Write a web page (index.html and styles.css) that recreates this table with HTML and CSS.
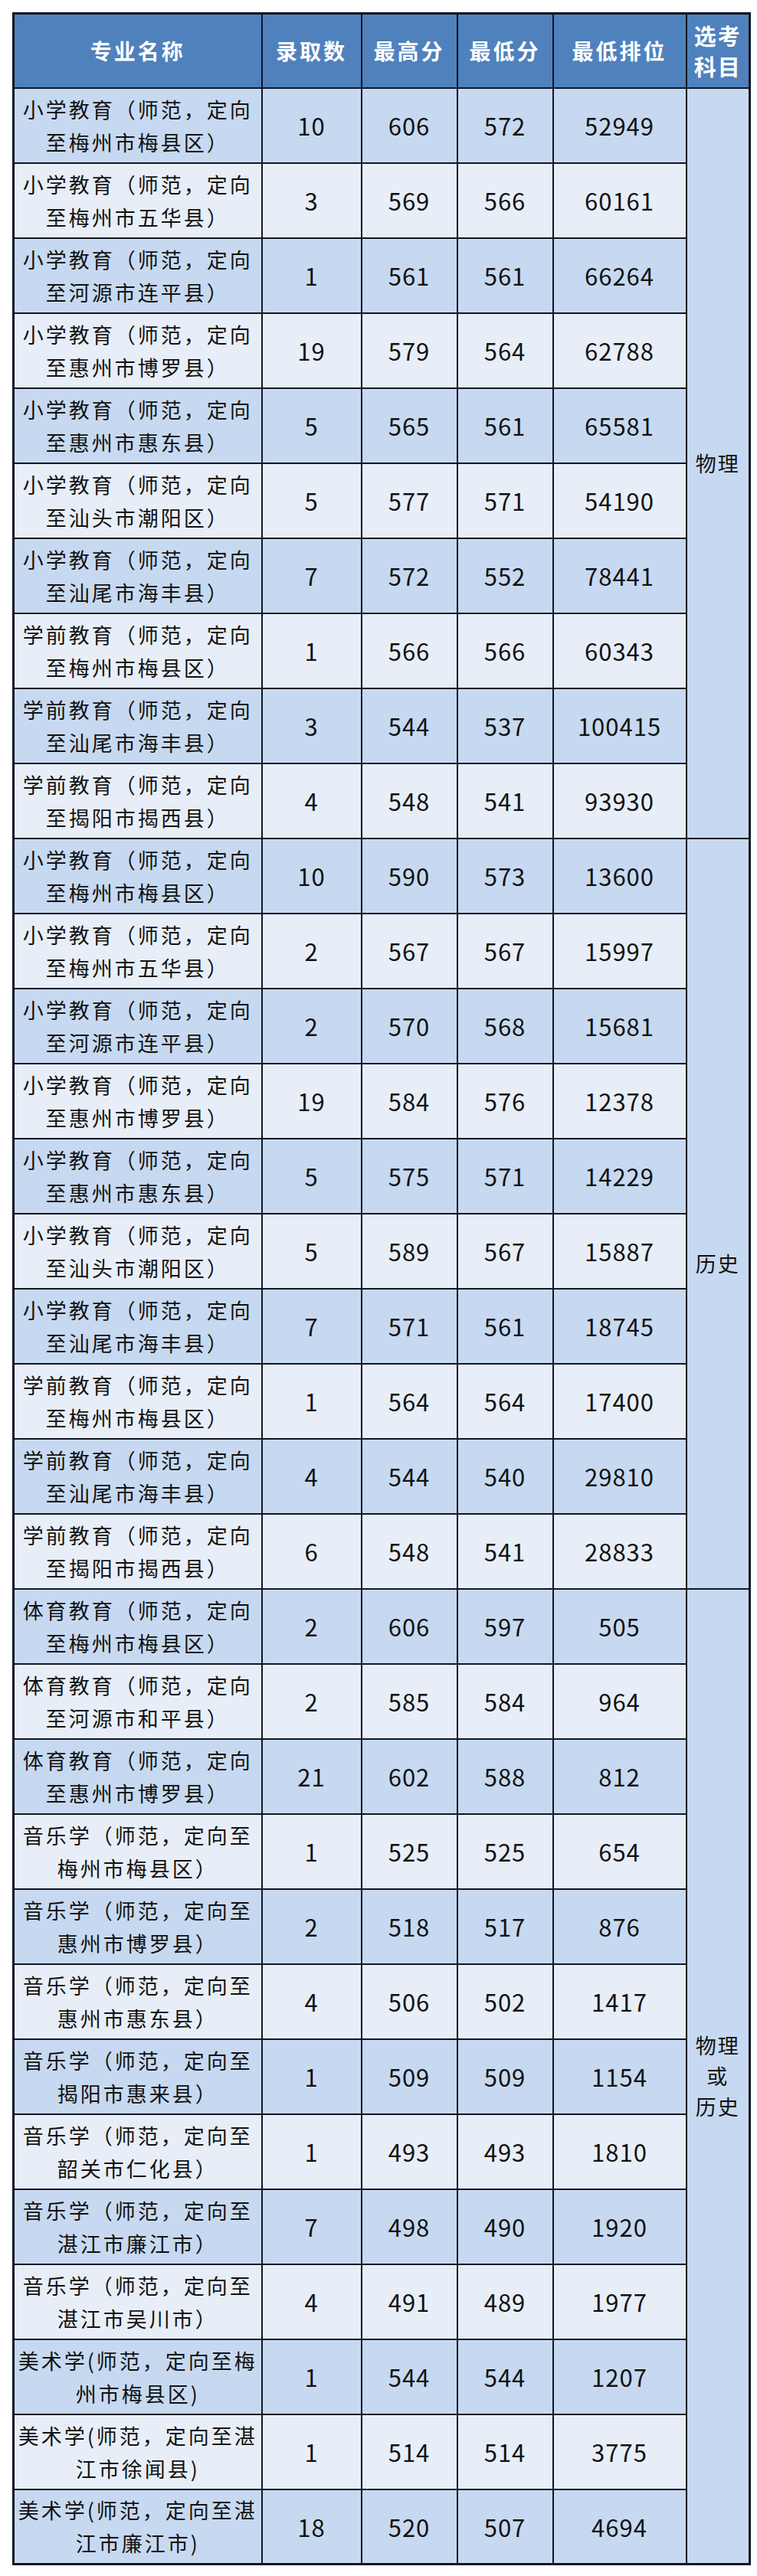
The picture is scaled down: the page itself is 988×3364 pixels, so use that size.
FILE: index.html
```html
<!DOCTYPE html>
<html lang="zh-CN">
<head>
<meta charset="utf-8">
<title>录取分数</title>
<link rel="stylesheet" href="styles.css">
</head>
<body>
<table class="score-table">
  <colgroup>
    <col class="c-name"><col class="c-num"><col class="c-hi"><col class="c-lo"><col class="c-rank"><col class="c-subj">
  </colgroup>
  <thead>
    <tr>
      <th>专业名称</th><th>录取数</th><th>最高分</th><th>最低分</th><th>最低排位</th><th class="subj-head">选考<br>科目</th>
    </tr>
  </thead>
  <tbody>
    <tr><td class="name">小学教育（师范，定向<br>至梅州市梅县区）</td><td>10</td><td>606</td><td>572</td><td>52949</td><td class="subj" rowspan="10">物理</td></tr>
    <tr><td class="name">小学教育（师范，定向<br>至梅州市五华县）</td><td>3</td><td>569</td><td>566</td><td>60161</td></tr>
    <tr><td class="name">小学教育（师范，定向<br>至河源市连平县）</td><td>1</td><td>561</td><td>561</td><td>66264</td></tr>
    <tr><td class="name">小学教育（师范，定向<br>至惠州市博罗县）</td><td>19</td><td>579</td><td>564</td><td>62788</td></tr>
    <tr><td class="name">小学教育（师范，定向<br>至惠州市惠东县）</td><td>5</td><td>565</td><td>561</td><td>65581</td></tr>
    <tr><td class="name">小学教育（师范，定向<br>至汕头市潮阳区）</td><td>5</td><td>577</td><td>571</td><td>54190</td></tr>
    <tr><td class="name">小学教育（师范，定向<br>至汕尾市海丰县）</td><td>7</td><td>572</td><td>552</td><td>78441</td></tr>
    <tr><td class="name">学前教育（师范，定向<br>至梅州市梅县区）</td><td>1</td><td>566</td><td>566</td><td>60343</td></tr>
    <tr><td class="name">学前教育（师范，定向<br>至汕尾市海丰县）</td><td>3</td><td>544</td><td>537</td><td>100415</td></tr>
    <tr><td class="name">学前教育（师范，定向<br>至揭阳市揭西县）</td><td>4</td><td>548</td><td>541</td><td>93930</td></tr>

    <tr><td class="name">小学教育（师范，定向<br>至梅州市梅县区）</td><td>10</td><td>590</td><td>573</td><td>13600</td><td class="subj subj-low" rowspan="10">历史</td></tr>
    <tr><td class="name">小学教育（师范，定向<br>至梅州市五华县）</td><td>2</td><td>567</td><td>567</td><td>15997</td></tr>
    <tr><td class="name">小学教育（师范，定向<br>至河源市连平县）</td><td>2</td><td>570</td><td>568</td><td>15681</td></tr>
    <tr><td class="name">小学教育（师范，定向<br>至惠州市博罗县）</td><td>19</td><td>584</td><td>576</td><td>12378</td></tr>
    <tr><td class="name">小学教育（师范，定向<br>至惠州市惠东县）</td><td>5</td><td>575</td><td>571</td><td>14229</td></tr>
    <tr><td class="name">小学教育（师范，定向<br>至汕头市潮阳区）</td><td>5</td><td>589</td><td>567</td><td>15887</td></tr>
    <tr><td class="name">小学教育（师范，定向<br>至汕尾市海丰县）</td><td>7</td><td>571</td><td>561</td><td>18745</td></tr>
    <tr><td class="name">学前教育（师范，定向<br>至梅州市梅县区）</td><td>1</td><td>564</td><td>564</td><td>17400</td></tr>
    <tr><td class="name">学前教育（师范，定向<br>至汕尾市海丰县）</td><td>4</td><td>544</td><td>540</td><td>29810</td></tr>
    <tr><td class="name">学前教育（师范，定向<br>至揭阳市揭西县）</td><td>6</td><td>548</td><td>541</td><td>28833</td></tr>

    <tr><td class="name">体育教育（师范，定向<br>至梅州市梅县区）</td><td>2</td><td>606</td><td>597</td><td>505</td><td class="subj" rowspan="13">物理<br>或<br>历史</td></tr>
    <tr><td class="name">体育教育（师范，定向<br>至河源市和平县）</td><td>2</td><td>585</td><td>584</td><td>964</td></tr>
    <tr><td class="name">体育教育（师范，定向<br>至惠州市博罗县）</td><td>21</td><td>602</td><td>588</td><td>812</td></tr>
    <tr><td class="name">音乐学（师范，定向至<br>梅州市梅县区）</td><td>1</td><td>525</td><td>525</td><td>654</td></tr>
    <tr><td class="name">音乐学（师范，定向至<br>惠州市博罗县）</td><td>2</td><td>518</td><td>517</td><td>876</td></tr>
    <tr><td class="name">音乐学（师范，定向至<br>惠州市惠东县）</td><td>4</td><td>506</td><td>502</td><td>1417</td></tr>
    <tr><td class="name">音乐学（师范，定向至<br>揭阳市惠来县）</td><td>1</td><td>509</td><td>509</td><td>1154</td></tr>
    <tr><td class="name">音乐学（师范，定向至<br>韶关市仁化县）</td><td>1</td><td>493</td><td>493</td><td>1810</td></tr>
    <tr><td class="name">音乐学（师范，定向至<br>湛江市廉江市）</td><td>7</td><td>498</td><td>490</td><td>1920</td></tr>
    <tr><td class="name">音乐学（师范，定向至<br>湛江市吴川市）</td><td>4</td><td>491</td><td>489</td><td>1977</td></tr>
    <tr><td class="name">美术学(师范，定向至梅<br>州市梅县区)</td><td>1</td><td>544</td><td>544</td><td>1207</td></tr>
    <tr><td class="name">美术学(师范，定向至湛<br>江市徐闻县)</td><td>1</td><td>514</td><td>514</td><td>3775</td></tr>
    <tr><td class="name">美术学(师范，定向至湛<br>江市廉江市)</td><td>18</td><td>520</td><td>507</td><td>4694</td></tr>
  </tbody>
</table>
</body>
</html>
```

FILE: styles.css
```css
html, body {
  margin: 0;
  padding: 0;
  background: #ffffff;
}

body {
  padding: 16px 11px 17px 16px;
  font-family: "Noto Sans CJK SC", "Noto Sans", sans-serif;
  color: #111111;
}

.score-table {
  width: 961px;
  table-layout: fixed;
  border-collapse: collapse;
  border: 3px solid #121622;
}

.c-name { width: 324px; }
.c-num { width: 130px; }
.c-hi { width: 125px; }
.c-lo { width: 125px; }
.c-rank { width: 174px; }
.c-subj { width: 83px; }

.score-table th,
.score-table td {
  border: 2px solid #121622;
  padding: 0;
  text-align: center;
  vertical-align: middle;
}

.score-table thead tr {
  height: 97px;
}

.score-table th {
  background: #4f81bd;
  color: #ffffff;
  font-weight: 700;
  font-size: 28px;
  letter-spacing: 3px;
  line-height: 40px;
}

.score-table th.subj-head {
  letter-spacing: 2px;
  font-size: 29px;
}

.score-table tbody tr {
  height: 98px;
  background: #e8eef7;
}

.score-table tbody tr:nth-child(odd) {
  background: #c7d9f0;
}

.score-table td {
  font-size: 31px;
  letter-spacing: 1px;
}

.score-table td.name {
  font-size: 27px;
  letter-spacing: 3px;
  line-height: 43px;
  white-space: nowrap;
}

.score-table td.subj {
  background: #c7d9f0;
  font-size: 27px;
  letter-spacing: 2px;
  line-height: 40px;
}

.score-table td.subj-low {
  padding-top: 130px;
}
```
